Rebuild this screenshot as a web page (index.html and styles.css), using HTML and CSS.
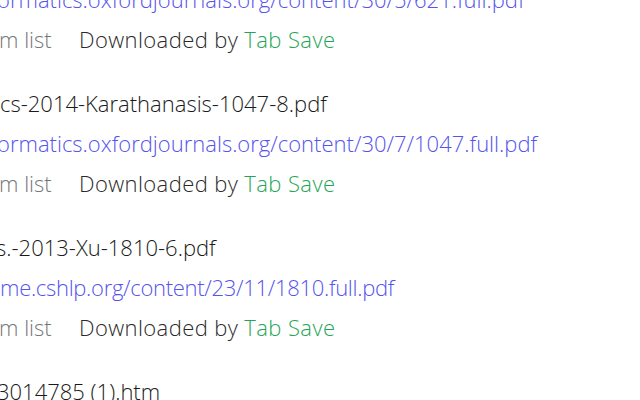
FILE: index.html
```html
<!DOCTYPE html>
<html>
<head>
<meta charset="utf-8">
<link rel="stylesheet" href="styles.css">
</head>
<body>
<div class="list">
  <div class="item">
    <div class="line name"><span class="cut">Bioinformatics-2014-</span><span class="vis">Rxxx-621-8.pdf</span></div>
    <div class="line link"><span class="cut">http://bioinf</span><span class="vis off3">ormatics.oxfordjournals.org/content/30/5/621.full.pdf</span></div>
    <div class="line actions"><span class="cut">Remove fro</span><span class="vis mlist off1">m list</span><span class="by">Downloaded by <span class="tab">Tab Save</span></span></div>
  </div>
  <div class="item">
    <div class="line name"><span class="cut">Bioinformati</span><span class="vis">cs-2014-Karathanasis-1047-8.pdf</span></div>
    <div class="line link"><span class="cut">http://bioinf</span><span class="vis off3">ormatics.oxfordjournals.org/content/30/7/1047.full.pdf</span></div>
    <div class="line actions"><span class="cut">Remove fro</span><span class="vis mlist off1">m list</span><span class="by">Downloaded by <span class="tab">Tab Save</span></span></div>
  </div>
  <div class="item">
    <div class="line name"><span class="cut">Genome-Re</span><span class="vis off4">s.-2013-Xu-1810-6.pdf</span></div>
    <div class="line link"><span class="cut">http://geno</span><span class="vis tight">me.cshlp.org/content/23/11/1810.full.pdf</span></div>
    <div class="line actions"><span class="cut">Remove fro</span><span class="vis mlist off1">m list</span><span class="by">Downloaded by <span class="tab">Tab Save</span></span></div>
  </div>
  <div class="item">
    <div class="line name"><span class="cut">1</span><span class="vis off3">3014785 (1).htm</span></div>
  </div>
</div>
</body>
</html>
```
FILE: styles.css
```css
html, body {
  margin: 0;
  padding: 0;
  background: #ffffff;
  overflow: hidden;
}
body {
  width: 640px;
  height: 400px;
  font-family: "Open Sans", "Noto Sans", sans-serif;
  font-size: 22px;
  font-weight: 300;
}
.list {
  margin-top: -61px;
  margin-left: -300px;
  display: flex;
  flex-direction: column;
  gap: 24px;
}
.item {
  display: flex;
  flex-direction: column;
}
.line {
  height: 40px;
  line-height: 40px;
  white-space: nowrap;
  display: flex;
}
.cut {
  display: inline-block;
  width: 300px;
  text-align: right;
  overflow: hidden;
  flex: none;
}
.vis { display: inline-block; }
.off1 { margin-left: -1px; }
.off3 { margin-left: -3px; }
.off4 { margin-left: -4px; }
.tight { letter-spacing: -0.3px; }
.name { color: #1a1a1a; }
.link { color: #5555ee; }
.actions .cut, .mlist { color: #777777; }
.mlist { width: 80px; }
.by { color: #2a2a2a; letter-spacing: 0.4px; }
.tab { color: #1fa656; }
```
